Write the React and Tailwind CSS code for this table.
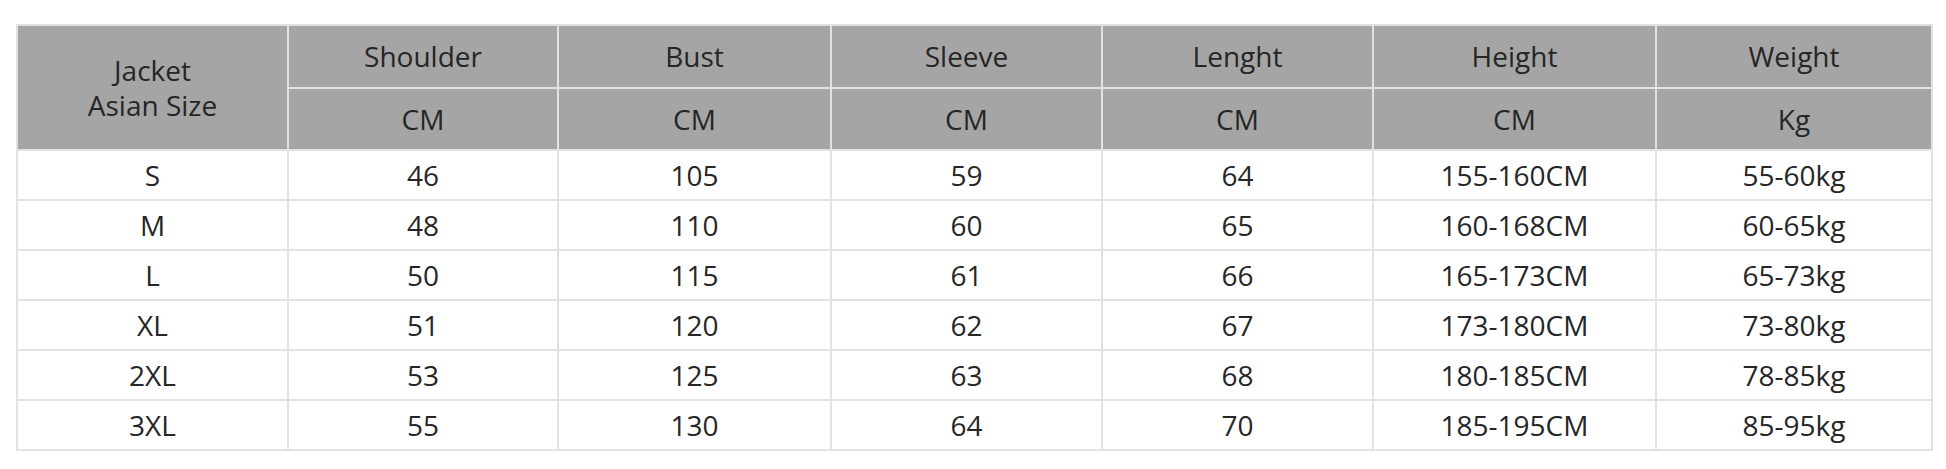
export default function App() {
  const cols = [271, 270, 273, 271, 271, 283, 276];
  const heads = ["Shoulder", "Bust", "Sleeve", "Lenght", "Height", "Weight"];
  const units = ["CM", "CM", "CM", "CM", "CM", "Kg"];
  const rows = [
    ["S", "46", "105", "59", "64", "155-160CM", "55-60kg"],
    ["M", "48", "110", "60", "65", "160-168CM", "60-65kg"],
    ["L", "50", "115", "61", "66", "165-173CM", "65-73kg"],
    ["XL", "51", "120", "62", "67", "173-180CM", "73-80kg"],
    ["2XL", "53", "125", "63", "68", "180-185CM", "78-85kg"],
    ["3XL", "55", "130", "64", "70", "185-195CM", "85-95kg"],
  ];
  return (
    <div className="bg-white w-[1946px] h-[469px] pl-[16px] pt-[24px] text-[#262626] [font-family:'Open_Sans',sans-serif]">
      <table className="table-fixed border-collapse w-[1917px] text-[28px] leading-[35px]">
        <colgroup>
          {cols.map((w, i) => (
            <col key={i} style={{ width: w }} />
          ))}
        </colgroup>
        <thead>
          <tr className="h-[63px] bg-[#a5a5a5]">
            <th rowSpan={2} className="border-2 border-[#e2e2e2] font-normal text-center align-middle">
              Jacket
              <br />
              Asian Size
            </th>
            {heads.map((h) => (
              <th key={h} className="border-2 border-[#e2e2e2] font-normal text-center align-middle">
                {h}
              </th>
            ))}
          </tr>
          <tr className="h-[62px] bg-[#a5a5a5]">
            {units.map((u, i) => (
              <th key={i} className="border-2 border-[#e2e2e2] font-normal text-center align-middle">
                {u}
              </th>
            ))}
          </tr>
        </thead>
        <tbody>
          {rows.map((r, i) => (
            <tr key={i} className="h-[50px]">
              {r.map((c, j) => (
                <td key={j} className="border-2 border-[#e2e2e2] text-center align-middle">
                  {c}
                </td>
              ))}
            </tr>
          ))}
        </tbody>
      </table>
    </div>
  );
}
